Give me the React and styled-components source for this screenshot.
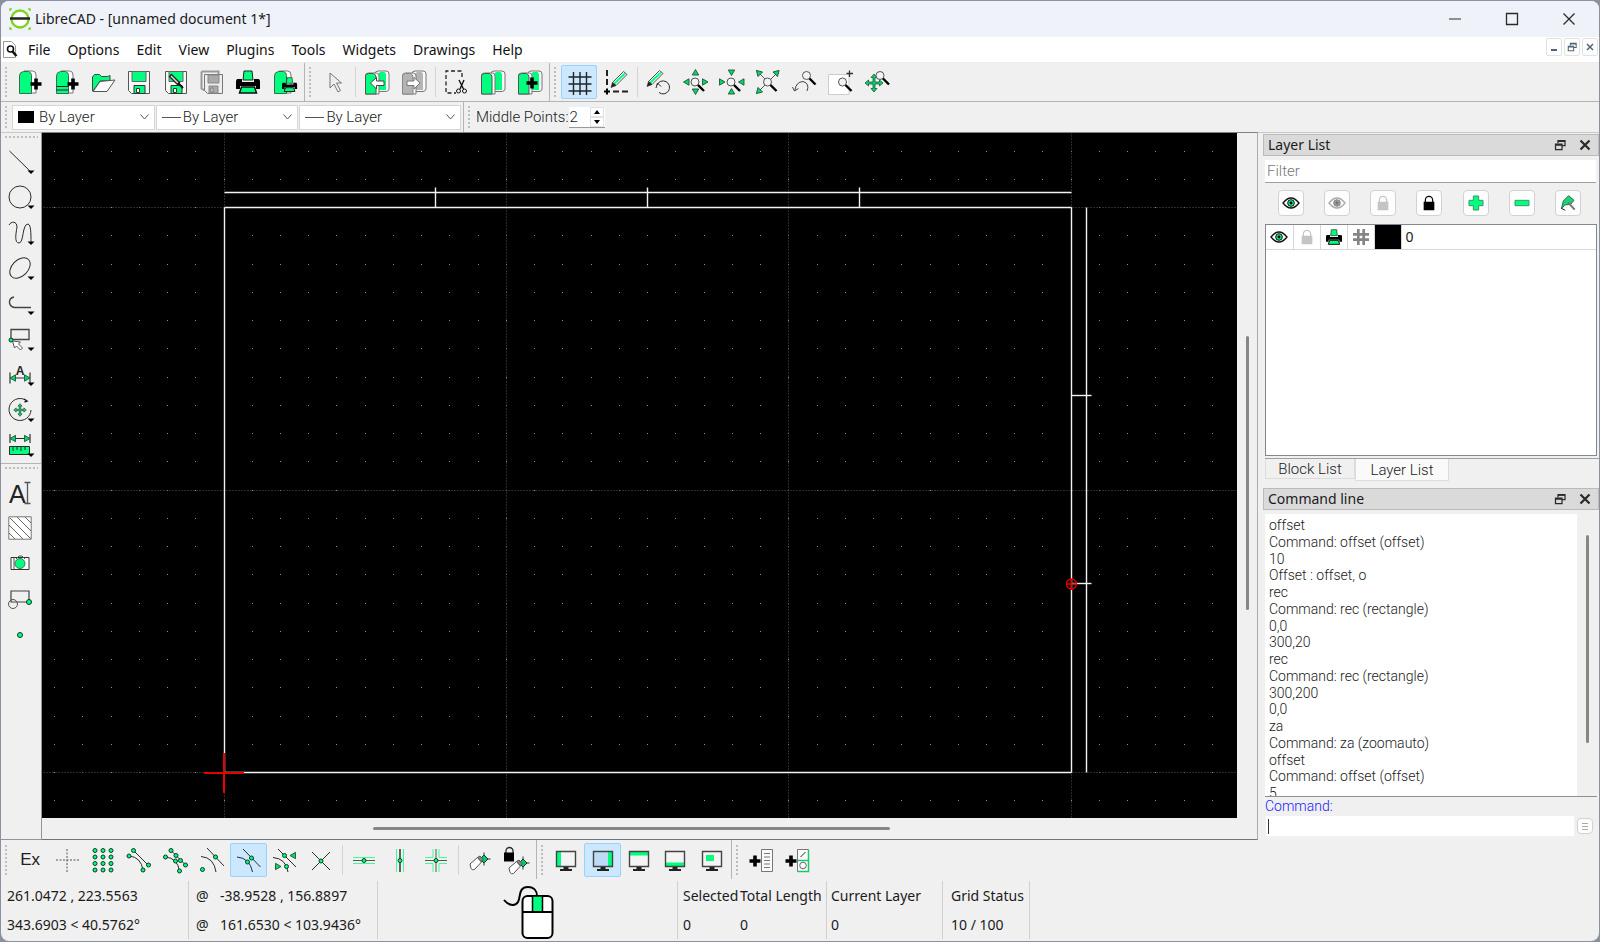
import React from "react";
import styled, { createGlobalStyle } from "styled-components";

const GREEN = "#00ff7f";
const INK = "#2b2b2b";

const GlobalStyle = createGlobalStyle`
  * {
    box-sizing: border-box;
  }

  body {
    margin: 0;
    background: #8b919d;
    color: #1a1a1a;
    font-family: "Noto Sans", "Open Sans", sans-serif;
    font-size: 14px;
    line-height: 20px;
  }

  button, input, select {
    font: inherit;
    color: inherit;
    margin: 0;
    padding: 0;
    border: none;
    outline: none;
    border-radius: 0;
    background: transparent;
  }
`;

/* ---------- icons ---------- */

const Svg = styled.svg`
  display: block;
  flex: none;
  overflow: visible;
  fill: none;
  stroke: ${(p) => p.$color || INK};
`;

const Dot = ({ x, y, r = 2 }) => <circle cx={x} cy={y} r={r} fill={GREEN} stroke="#0b3d22" strokeWidth="1" />;

const Plus = ({ x, y, s = 5.5, w = 3.6 }) => (
  <path d={`M${x - s} ${y}h${2 * s}M${x} ${y - s}v${2 * s}`} stroke="#000" strokeWidth={w} />
);

const Magnifier = ({ x, y }) => (
  <g>
    <circle cx={x} cy={y} r="4" stroke="#555" fill="#f4f4f4" />
    <path d={`M${x + 3} ${y + 3}l6 6`} stroke="#000" strokeWidth="2.4" />
  </g>
);

const Tri = ({ x, y, a = 0 }) => (
  <path d="M0 -3L3.2 2.5H-3.2Z" transform={`translate(${x} ${y}) rotate(${a})`} fill="#00d86c" stroke="#24543a" strokeWidth=".9" />
);

const Pages = ({ fill, edge = "#555", children }) => (
  <g>
    <path d="M10 4q0-3 3-3h8q3 0 3 3v15q0 2-3 2.500H10z" fill="#fafafa" stroke="#777" />
    <path d="M13.500 4q.5-2 2-2h4q1.500 1 1.500 3v15h-7.500z" fill={fill} stroke="none" />
    <path d="M.5 6q0-3 3-3h8q2.500 0 2.500 3v18H.5z" fill="#fafafa" stroke="#777" />
    <path d="M.5 6q0-2.500 3-2.500h5q2.500 1 2.500 3.500v17H.5z" fill={fill} stroke={edge} />
    {children}
  </g>
);

const Page = () => (
  <g>
    <path d="M6 1h8.500q3.500 0 3.500 4v18H7" fill="#fff" stroke="#777" />
    <path d="M1.500 6q0-4 4-4.500h5q3 1 3 4V23.500h-12z" fill={GREEN} stroke="#3c6b50" />
  </g>
);

const Floppy = ({ fill }) => (
  <g>
    <path d="M1.500 1.500h21v22h-18l-3-3z" fill="#f7f7f7" stroke="#555" />
    <path d="M5 1.500h14v10H5z" fill={fill} stroke="#666" />
    <path d="M7 15.500h11v8H7z" fill={fill} stroke="#333" />
    <path d="M9.500 18.500h3v4h-3z" fill="#fff" stroke="#333" />
  </g>
);

const Pencil = ({ x, y }) => (
  <g transform={`translate(${x} ${y})`}>
    <path d="M1.500-5L12.500-16l3.500 3L5-2z" fill="#f8f8f8" stroke="#555" />
    <path d="M3-3.500L14-14" stroke={GREEN} strokeWidth="2" />
    <path d="M0 0l1.500-5L5-2z" fill="#222" stroke="#222" strokeWidth=".6" />
  </g>
);

const Printer = () => (
  <g>
    <path d="M8 1h8l1 9H7z" fill={GREEN} stroke="#222" />
    <path d="M1 9h5v3h12V9h5l1 2v8h-4v-3H4v3H0v-8z" fill="#000" stroke="none" />
    <path d="M5.500 17h13l2 6h-17z" fill={GREEN} stroke="#111" strokeWidth="1.500" />
  </g>
);

const Cursor = ({ fill = "#fff" }) => (
  <path d="M8 3v15l4-4 4 8 2.500-1.500-4-7.500h5z" fill={fill} stroke="#777" />
);

const Monitor = ({ children, fill = "#f4f4f4" }) => (
  <g>
    <path d="M2.500 3.500h19v15h-19z" fill={fill} stroke="none" />
    {children}
    <path d="M2.500 3.500h19v15h-19z" stroke="#444" strokeWidth="1.400" />
    <path d="M9.500 20h5M6 22h12" stroke="#222" strokeWidth="1.800" />
  </g>
);

const Eraser = ({ x = 0, y = 0 }) => (
  <g transform={`translate(${x} ${y})`}>
    <path d="M8.500 11h13M15 4.500v13" stroke="#333" />
    <path d="M15 7l4 4-4 4-4-4z" fill="#00c967" stroke="#0b3d22" />
    <path d="M1 16l7.500-6.500 4 4.500-7 7.500q-2 1-3.500-1z" fill="#fff" stroke="#555" />
    <path d="M8.500 9.500L11 8l3 3.500-1.500 2.500z" fill="#888" stroke="#555" />
  </g>
);

const Lock = ({ color = "#000" }) => (
  <g>
    <path d="M6.500 12V8a5.500 6 0 0 1 11 0v4" stroke={color} strokeWidth="1.800" />
    <path d="M4 10h16v13H4z" fill={color} stroke="none" />
  </g>
);

const Eye = ({ off }) => (
  <g>
    <path d="M0 12q12-15 24 0-12 15-24 0z" fill="#fff" stroke={off ? "#aaa" : "#111"} strokeWidth="2" />
    <circle cx="12" cy="12" r="5" fill={off ? "#999" : GREEN} stroke={off ? "#888" : "#111"} strokeWidth="1.500" />
    <circle cx="12" cy="12" r="2.200" fill={off ? "#777" : "#000"} stroke="none" />
  </g>
);

const moveArrows =
  "M0-9l3 3.500H1v4.500h4.500v-2L9 0 5.500 3V1H1v4.500h2L0 9l-3-3.500h2V1h-4.500v2L-9 0l3.500-3v2H-1v-4.500h-2z";

const icons = {
  newFile: <g><Page /><Plus x={18} y={14} /></g>,
  newTemplate: <g><Page /><path d="M1.500 16.500h12M1.500 20h12" stroke="#222" /><Plus x={18} y={14} /></g>,
  open: (
    <g>
      <path d="M1.500 21V7l2-2.500h5l2 2h6l2.500-1v5L9 11 2 21z" fill={GREEN} stroke="#444" />
      <path d="M2 21.500L9 11.500l15-1.500-8 11.500z" fill="#fafafa" stroke="#555" />
    </g>
  ),
  save: <Floppy fill={GREEN} />,
  saveAs: <g><Floppy fill={GREEN} /><path d="M6 5l9 9" stroke="#222" strokeWidth="4" /><path d="M7 6l7 7" stroke="#ddd" strokeWidth="1.500" /><path d="M14 13l5 5" stroke="#111" strokeWidth="2" /></g>,
  saveAll: (
    <g>
      <path d="M1.500 1.500h17v3M1.500 1.500v17l3 2" stroke="#999" strokeWidth="2" />
      <path d="M4.500 4.500h18v19h-15l-3-3z" fill="#eee" stroke="#777" />
      <path d="M8 5h11v8H8zM9 16h9v7H9z" fill="#aaa" stroke="#888" />
      <path d="M11 18h2v4h-2z" fill="#fff" stroke="#777" />
    </g>
  ),
  print: <Printer />,
  preview: <g><Page /><g transform="translate(9 7) scale(.63)"><Printer /></g></g>,
  cursor: <Cursor fill="#eee" />,
  undo: <Pages fill={GREEN}><path d="M5.500 13l6-5.500V11h7.500v4.500h-7.500V19z" fill="#fff" stroke="#444" /></Pages>,
  redo: <Pages fill="#b4b4b4" edge="#888"><path d="M18 13l-6-5.500V11H5v4.500h7V19z" fill="#fff" stroke="#777" /></Pages>,
  cut: (
    <g>
      <path d="M17 7V1H1v22h10" strokeDasharray="4 2.500" stroke="#222" strokeWidth="1.300" />
      <path d="M14 10l4.500 9M19 10l-4 9" stroke="#111" strokeWidth="1.400" />
      <circle cx="13.500" cy="21" r="2" stroke="#111" /><circle cx="19.500" cy="21" r="2" stroke="#111" />
    </g>
  ),
  copy: <Pages fill={GREEN} />,
  paste: <Pages fill={GREEN}><Plus x={14} y={13} /></Pages>,
  grid: <path d="M6.500 2v23M13 2v23M19.500 2v23M1.500 7h23M1.500 14h23M1.500 21h23" stroke="#222" strokeWidth="1.400" />,
  draft: <g><path d="M3 0v6M3 9v6" stroke="#222" strokeWidth="2" /><path d="M9 21.500h6M18 21.500h6" stroke="#222" strokeWidth="2" /><Plus x={3} y={21.5} s={3} w={2} /><Pencil x={7} y={17.5} /></g>,
  redraw: <g><path d="M10 15a6.500 6.500 0 1 1 2 7.500M9 18l1.500-5 3.500 3.500" /><Pencil x={0} y={16.5} /></g>,
  zoomIn: <g><Tri x={11.5} y={2.5} /><Tri x={11.5} y={21.5} a={180} /><Tri x={2.5} y={12} a={270} /><Tri x={21} y={12} a={90} /><Magnifier x={11} y={12} /></g>,
  zoomOut: <g><Tri x={11.5} y={2.5} a={180} /><Tri x={11.5} y={21.5} /><Tri x={2} y={12} a={90} /><Tri x={21.5} y={12} a={270} /><Magnifier x={11} y={12} /></g>,
  zoomAuto: <g><path d="M3 3l18 18M21 3L3 21" stroke="#555" /><Tri x={2.5} y={2.5} a={-45} /><Tri x={21} y={2.5} a={45} /><Tri x={2.5} y={21.5} a={225} /><Magnifier x={11.5} y={12} /></g>,
  zoomPrevious: <g><path d="M2 20q1-8 8-8.500 7 2 4 9.500M-.5 17l2 4 4-2.500" stroke="#444" /><Magnifier x={13.5} y={5.5} /></g>,
  zoomWindow: <g><path d="M-.5 4.500h20.500v20H-.5z" fill="#fff" stroke="#ccc" /><path d="M17.500 3.500h6.500M20.500.5V7" stroke="#333" strokeWidth="1.300" /><Magnifier x={13.5} y={12} /></g>,
  pan: <g><path d={moveArrows} transform="translate(8 13)" fill="#00d86c" stroke="#24543a" strokeWidth=".8" /><Magnifier x={14} y={5.5} /></g>,

  line: <path d="M1.500 1L23 22" />,
  circle: <circle cx="12" cy="12" r="11" />,
  curve: <path d="M1 4C3 0 9 0 9 6 8 12 6 22 11 22 16 22 14 3 20 3 23 4 23 12 23 22" />,
  ellipse: <ellipse cx="12" cy="12" rx="12" ry="8" transform="rotate(-45 12 12)" />,
  polyline: <path d="M6 6Q1 7 1.500 12q1 4 5 4.500H23" stroke="#444" strokeWidth="1.400" />,
  select: <g><path d="M3 2.500h18v10H3z" stroke="#444" strokeWidth="1.300" /><Dot x={3} y={13} /><path d="M4.500 14l2 7 2-2 4 4 2-2-4-4 2-2z" fill="#fff" stroke="#555" /></g>,
  dimension: <g><path d="M2 10.500v11M22 10.500v11M3 16h18" stroke="#333" strokeWidth="1.200" /><Tri x={5} y={16} a={270} /><Tri x={19} y={16} a={90} /><text x="12" y="13" textAnchor="middle" fontFamily="Liberation Sans, sans-serif" fontWeight="bold" fontSize="12" fill="#222" stroke="none">A</text></g>,
  modify: <g><path d="M19 3A11 11 0 1 0 23 12" /><path d="M16 1l3 2-2.500 1" stroke="#222" strokeWidth="1.500" /><path d={moveArrows} transform="translate(12 12) scale(.7)" fill="#00d86c" stroke="#24543a" /></g>,
  measure: <g><path d="M2 1v9M22 1v9M3 5.500h18" strokeWidth="1.200" /><Tri x={5} y={5.5} a={270} /><Tri x={19} y={5.5} a={90} /><path d="M1.500 13.500h20v8h-20z" fill={GREEN} /><path d="M5 14v4M9 14v3M13 14v4M17 14v3" /></g>,
  text: <g><text x="1" y="22" fontFamily="Liberation Sans, sans-serif" fontSize="25" fill="#222" stroke="none">A</text><path d="M16.500 1.500h6M16.500 22.500h6M19.500 1.500v21" stroke="#555" strokeWidth="1.300" /></g>,
  hatch: <g><path d="M.8.800h22.400v22.400H.8z" fill="#fff" stroke="#777" /><path d="M1 17l6 6M1 9l14 14M2 2l21 21M9 1l14 14M17 1l6 6" stroke="#666" /></g>,
  image: <g><path d="M3 5.500h18v12H3z" fill="#fff" stroke="#333" /><path d="M6 6v11M8 7l3-3h3l3 3" stroke="#555" /><circle cx="12" cy="11.500" r="5" fill={GREEN} stroke="#377553" /></g>,
  block: <g><path d="M3 3h18v11H3z" stroke="#444" strokeWidth="1.200" /><circle cx="5" cy="16" r="4.500" stroke="#555" /><Dot x={21} y={14} r={2.5} /></g>,
  point: <Dot x={12} y={12} r={2.5} />,

  free: <path d="M1 12h23M12 1v23" strokeDasharray="2 1.500" stroke="#555" />,
  snapGrid: <g>{[4, 12, 20].map((x) => [2.5, 9, 15.5, 22].map((y) => <Dot key={`${x}-${y}`} x={x} y={y} />))}</g>,
  endpoints: <g><path d="M6.500 2.500l15 15M2 8q12 1 14 14" /><Dot x={2} y={8} /><Dot x={6.500} y={2.5} /><Dot x={21.500} y={17} /><Dot x={16} y={22} /></g>,
  onEntity: <g><path d="M7 2.500l15 15M1.500 9q12 1 14 14" /><Dot x={1.500} y={9} /><Dot x={7} y={2.500} /><Dot x={12} y={7.500} /><Dot x={11.500} y={13} /><Dot x={16.500} y={12.500} /><Dot x={21.500} y={17} /><Dot x={15.500} y={23} /></g>,
  center: <g><path d="M7 0l17 18M1 8.500q13 1 15 15.500" /><Dot x={15.500} y={9} /><Dot x={2.500} y={21.500} /></g>,
  middle: <g><path d="M7 1l17.500 18M1 9q13 1 15.500 15" /><Dot x={15.500} y={10} /><Dot x={11.500} y={14} /></g>,
  distance: <g><path d="M5 1l18 18M0 9.500q13 1 15 14.500" /><Dot x={11.500} y={7.500} /><Dot x={13.500} y={18.500} /><Tri x={20} y={7.500} a={270} /><Tri x={5} y={18.500} a={90} /></g>,
  intersection: <g><path d="M3 4l18 18M21 4L3 22" /><Dot x={12} y={13} /></g>,
  horizontal: <g><path d="M1 9.500h22M1 15.500h22" stroke="#3dfd99" /><path d="M1 12.500h22" stroke="#555" /><Dot x={12} y={12.500} /></g>,
  vertical: <g><path d="M7.500 1v23M14.500 1v23" stroke="#3dfd99" /><path d="M11 1v23" stroke="#333" strokeWidth="1.500" /><Dot x={11} y={12.500} /></g>,
  ortho: <g><path d="M0 9.500h8V1M14 1v8.500h8M0 15.500h8V24M14 24v-8.500h8" stroke="#3dfd99" /><path d="M0 12.500h22M11 1v23" stroke="#555" /><Dot x={11} y={12.500} /></g>,
  relativeZero: <Eraser x={1} />,
  lockZero: <g><Eraser x={3} y={4} /><path d="M1 5V3a3.500 3.500 0 0 1 7 0v2" strokeWidth="1.300" /><path d="M-1 4.500H9v9H-1z" fill="#000" stroke="none" /></g>,
  dockLeft: <Monitor><path d="M3 4h4v14H3z" fill={GREEN} stroke="none" /></Monitor>,
  dockRight: <Monitor fill="#bcdcf5"><path d="M17 4h4v14h-4z" fill={GREEN} stroke="none" /></Monitor>,
  dockTop: <Monitor><path d="M3 4h18v3.500H3z" fill={GREEN} stroke="none" /></Monitor>,
  dockBottom: <Monitor><path d="M3 14.500h18V18H3z" fill={GREEN} stroke="none" /></Monitor>,
  dockFloat: <Monitor><path d="M6 7h8v6H6z" fill={GREEN} stroke="none" /></Monitor>,
  addMenu: <g><Plus x={6} y={13} /><path d="M12.500 1.500h11v22h-11z" fill="#fafafa" stroke="#777" /><path d="M15 5.500h6M15 9h6M15 12.500h6M15 16h6M15 19.500h6" stroke="#777" /></g>,
  addToolbar: <g><Plus x={5} y={13} /><path d="M11.500 1.500h11v22h-11z" fill="#fafafa" stroke="#777" /><path d="M12 12.500h10.500V2M12 23.500h10.500v-11" stroke="#18c96f" strokeWidth="1.500" /><path d="M14.500 9l5-5" /><circle cx="17" cy="17.500" r="3.300" stroke="#666" /></g>,

  eye: <Eye />,
  eyeOff: <Eye off />,
  lockGrey: <Lock color="#c4c4c4" />,
  lock: <Lock />,
  add: <path d="M8 1.500h8V8h6.500v8H16v6.500H8V16H1.500V8H8z" fill={GREEN} stroke="#3f9468" strokeWidth="1.500" />,
  remove: <path d="M1.500 8h21v8h-21z" fill={GREEN} stroke="#3f9468" strokeWidth="1.500" />,
  attributes: <g><path d="M13 1l8 7-5 6-9 1-5 6 3-12z" fill="#18d677" stroke="#2b6c49" strokeWidth="1.500" /><path d="M12 11l10 11" stroke="#777" strokeWidth="3" /><path d="M2 20l6 3" stroke="#222" strokeWidth="1.500" /></g>,
  hash: <path d="M8 0v24M16 0v24M0 8h24M0 16h24" stroke="#858585" strokeWidth="4" />,
  restore: <g><path d="M8 9V3h14v10h-6" strokeWidth="2.500" /><path d="M8 4h14" strokeWidth="3.500" /><path d="M3 10h13v11H3zM3 12h13" strokeWidth="2.500" /></g>,
  close: <path d="M3 3l18 18M21 3L3 21" strokeWidth="4.500" />,
};

const Icon = ({ name, size = 24, menu, color }) => (
  <Svg width={size} height={size} viewBox="0 0 24 24" aria-hidden="true" $color={color}>
    {icons[name]}
    {menu && <path d="M19.500 20.500h7l-3.500 3.500z" fill="#000" stroke="none" />}
  </Svg>
);

/* ---------- window frame ---------- */

const Window = styled.div`
  display: flex;
  flex-direction: column;
  min-height: calc(100vh - 2px);
  margin: 1px;
  border-radius: 8px;
  overflow: hidden;
  background: #f0f0f0;
`;

const TitleBar = styled.header`
  display: flex;
  align-items: center;
  height: 36px;
  padding: 0 2px 0 8px;
  background: #eff3f9;
`;

const Title = styled.h1`
  flex: 1;
  margin: 0 0 0 4px;
  font-size: 14px;
  font-weight: 400;
`;

const WindowButton = styled.button`
  display: flex;
  align-items: center;
  justify-content: center;
  width: 57px;
  height: 36px;
`;

const MenuBar = styled.nav`
  display: flex;
  align-items: center;
  gap: 17px;
  height: 26px;
  padding: 1px 1px 0;
  background: #fff;
  border-bottom: 1px solid #ececec;

  a {
    color: #111;
    text-decoration: none;
  }
`;

const MenuIcon = styled.span`
  width: 16px;
  margin-right: -7px;
`;

const ChildButtons = styled.div`
  display: flex;
  gap: 2px;
  margin-left: auto;
  padding-bottom: 6px;
`;

const ChildButton = styled.button`
  display: flex;
  align-items: center;
  justify-content: center;
  width: 16px;
  height: 18px;
  background: #fff;
  border: 1px solid #e2e2e2;
  border-radius: 2px;
`;

/* ---------- toolbars ---------- */

const Toolbar = styled.div`
  display: flex;
  height: ${(p) => p.$height}px;
  border-bottom: ${(p) => (p.$line ? "1px solid #b4b4b4" : "none")};
`;

const Group = styled.div`
  display: flex;
  align-items: center;
  width: ${(p) => (p.$width ? `${p.$width}px` : "auto")};
  padding-right: 1px;
  border-right: ${(p) => (p.$last ? "none" : "1px solid #b4b4b4")};
`;

const Handle = styled.div`
  flex: none;
  width: 11px;
  height: ${(p) => p.$height || 30}px;
  padding-left: 4px;

  &::before {
    content: "";
    display: block;
    width: 2px;
    height: 100%;
    background: repeating-linear-gradient(#bdbdbd 0 2px, transparent 2px 4px);
  }
`;

const ToolButton = styled.button`
  display: flex;
  flex: 1;
  align-items: center;
  justify-content: center;
  min-width: 0;
  height: 34px;
  color: #222;
  font-family: "Liberation Sans", sans-serif;
  font-size: 17px;
  background: ${(p) => (p.$active ? "#cce8ff" : "transparent")};
  border: 1px solid ${(p) => (p.$active ? "#99d1ff" : "transparent")};
  border-radius: 2px;
`;

const Separator = styled.div`
  flex: none;
  width: 1px;
  height: 30px;
  margin: 0 3px;
  background: #d4d4d4;
`;

const Combo = styled.label`
  display: flex;
  align-items: center;
  width: ${(p) => p.$width}px;
  height: 25px;
  margin-right: 1px;
  padding: 0 5px 0 5px;
  background: #fff;
  border: 1px solid #d6d6d6;
`;

const ComboSelect = styled.select`
  flex: 1;
  min-width: 0;
  appearance: none;
  font-family: Roboto, "Liberation Sans", sans-serif;
  font-size: 15px;
  font-weight: 300;
`;

const Swatch = styled.span`
  width: 16px;
  height: 12px;
  margin-right: 5px;
  background: #000;
`;

const LineSample = styled.span`
  width: 19px;
  height: 1px;
  margin-right: 2px;
  background: #555;
`;

const SpinLabel = styled.label`
  padding-left: 1px;
  font-family: Roboto, "Liberation Sans", sans-serif;
  font-size: 15px;
  font-weight: 300;
`;

const Spin = styled.div`
  display: flex;
  width: 36px;
  height: 21px;
  background: #fff;
  border-bottom: 1px solid #999;

  input {
    flex: 1;
    min-width: 0;
    padding-left: 1px;
    font-family: Roboto, "Liberation Sans", sans-serif;
    font-size: 15px;
    font-weight: 300;
  }
`;

const SpinButtons = styled.div`
  display: flex;
  flex-direction: column;
  width: 14px;
  margin-right: 1px;

  button {
    display: flex;
    flex: 1;
    align-items: center;
    justify-content: center;
    border: 1px solid #e2e2e2;
  }
`;

/* ---------- main area ---------- */

const Main = styled.main`
  display: flex;
  flex: 1;
`;

const SideBar = styled.div`
  display: flex;
  flex-direction: column;
  width: 41px;
  border-top: 1px solid #c9c9c9;
  border-right: 1px solid #8f959c;
  border-bottom: 1px solid #8f959c;
`;

const SideGroup = styled.div`
  display: flex;
  flex-direction: column;
  height: ${(p) => p.$height}px;
  padding: 3px 2px 0 0;
  border-bottom: ${(p) => (p.$last ? "none" : "1px solid #b4b4b4")};

  &::before {
    content: "";
    flex: none;
    height: 2px;
    margin: 0 1px 6px 4px;
    background: repeating-linear-gradient(90deg, #bdbdbd 0 2px, transparent 2px 4px);
  }
`;

const Workspace = styled.section`
  display: flex;
  flex: 1;
  flex-direction: column;
  min-width: 0;
  border-top: 1px solid #7c8288;
  border-right: 1px solid #a9adb3;
  border-bottom: 1px solid #6c747c;
`;

const ViewRow = styled.div`
  display: flex;
  flex: 1;
`;

const Drawing = styled.svg`
  display: block;
  flex: 1;
  min-width: 0;
  min-height: 400px;
  background: #000;
  fill: none;
`;

const VerticalTrack = styled.div`
  display: flex;
  flex-direction: column;
  align-items: center;
  width: ${(p) => p.$width}px;
`;

const HorizontalTrack = styled.div`
  display: flex;
  align-items: center;
  height: 21px;
  padding-right: 20px;
`;

const Space = styled.span`
  flex: ${(p) => p.$part} 1 0;
`;

const Thumb = styled.span`
  flex: ${(p) => p.$part} 1 0;
  min-width: 3px;
  min-height: 3px;
  border-radius: 2px;
  background: #868686;
`;

const UNIT = 28.24;
const ORIGIN = { x: 182, y: 639.5 };

const at = (ux, uy) => [ORIGIN.x + ux * UNIT, ORIGIN.y - uy * UNIT];

const seg = (x1, y1, x2, y2) => {
  const a = at(x1, y1).map((v) => Math.floor(v) + 0.5);
  const b = at(x2, y2).map((v) => Math.floor(v) + 0.5);
  return `M${a[0]} ${a[1]}L${b[0]} ${b[1]}`;
};

const gridDots = () => {
  const parts = [];
  for (let i = -6; i < 60; i += 1) {
    for (let j = -12; j < 23; j += 1) {
      const [x, y] = at(i, j);
      parts.push(`M${Math.floor(x)} ${Math.floor(y) + 0.5}h1`);
    }
  }
  return parts.join("");
};

const DrawingView = () => (
  <Drawing width="100%" role="img" aria-label="Drawing">
    <path d={gridDots()} stroke="#8c8c8c" />
    <g stroke="#555" strokeDasharray="1 2">
      {[0, 10, 20, 30].map((x) => <path key={`v${x}`} d={seg(x, 30, x, -20)} />)}
      {[0, 10, 20].map((y) => <path key={`h${y}`} d={seg(-10, y, 60, y)} />)}
    </g>
    <g stroke="#f2f2f2" strokeWidth="1.400">
      <path d={seg(0, 0, 30, 0)} />
      <path d={seg(30, 0, 30, 20)} />
      <path d={seg(30, 20, 0, 20)} />
      <path d={seg(0, 20, 0, 0)} />
      <path d={seg(0, 20.54, 30, 20.54)} />
      <path d={seg(30.54, 0, 30.54, 20)} />
      {[7.5, 15, 22.5].map((x) => <path key={x} d={seg(x, 20, x, 20.73)} />)}
      {[6.68, 13.35].map((y) => <path key={y} d={seg(30, y, 30.72, y)} />)}
    </g>
    <g stroke="#e60000" strokeWidth="2">
      <path d="M162 640h40M182 620v40" />
    </g>
    <g stroke="#e60000" strokeWidth="1.300">
      <circle cx="1029.500" cy="451" r="5" />
      <path d="M1024 451h11M1029.500 446v11" />
    </g>
  </Drawing>
);

/* ---------- docks ---------- */

const Dock = styled.aside`
  display: flex;
  flex-direction: column;
  width: 341px;
  padding: 1px 0 4px 5px;
  border-top: 1px solid #c9c9c9;
`;

const DockTitle = styled.h2`
  display: flex;
  align-items: center;
  gap: 13px;
  height: 22px;
  margin: 0;
  padding: 0 7px 0 4px;
  font-size: 14px;
  font-weight: 400;
  background: #dadada;
  border: 1px solid #bababa;

  span {
    flex: 1;
  }
`;

const Filter = styled.input`
  height: 23px;
  margin: 4px 3px 0 2px;
  padding-left: 2px;
  font-family: Roboto, "Liberation Sans", sans-serif;
  font-size: 15px;
  font-weight: 300;
  background: #fff;
  border-bottom: 1px solid #a0a0a0;

  &::placeholder {
    color: #777;
    opacity: 1;
  }
`;

const LayerActions = styled.div`
  display: flex;
  justify-content: space-around;
  margin: 7px 8px 8px 5px;
`;

const LayerButton = styled.button`
  display: flex;
  align-items: center;
  justify-content: center;
  width: 26px;
  height: 26px;
  background: #fdfdfd;
  border: 1px solid #d2d2d2;
  border-radius: 4px;
`;

const LayerPane = styled.div`
  height: 232px;
  margin: 0 2px;
  background: #fff;
  border: 1px solid #828790;
`;

const LayerTable = styled.table`
  width: 100%;
  border-collapse: collapse;

  td {
    height: 24px;
    padding: 0 4px;
    border-bottom: 1px solid #d8d8d8;
  }
`;

const IconCell = styled.td`
  width: 27px;
  border-right: 1px solid #d8d8d8;
  background: ${(p) => (p.$black ? "#000" : "#fff")};

  svg {
    margin: 0 auto;
  }
`;

const Tabs = styled.div`
  display: flex;
  align-items: flex-start;
  height: 30px;
  margin: 2px 0 0 2px;
  border-top: 1px solid #a0a0a0;
`;

const Tab = styled.button`
  width: ${(p) => (p.$active ? 94 : 90)}px;
  height: ${(p) => (p.$active ? 22 : 20)}px;
  font-family: Roboto, "Liberation Sans", sans-serif;
  font-size: 15px;
  font-weight: 300;
  background: ${(p) => (p.$active ? "#fafafa" : "#f0f0f0")};
  border: 1px solid #dcdcdc;
  border-top: none;
`;

const LogArea = styled.div`
  display: flex;
  flex: 1;
  margin: 4px 2px 0;
  border-bottom: 1px solid #909090;
  overflow: hidden;
`;

const Log = styled.ol`
  display: flex;
  flex: 1;
  flex-direction: column;
  justify-content: space-between;
  min-height: 200px;
  margin: 0 0 -5px;
  padding: 3px 0 0 4px;
  list-style: none;
  background: #fff;
  font-family: Roboto, "Liberation Sans", sans-serif;
  font-weight: 300;
  line-height: 16px;
`;

const CommandLabel = styled.label`
  margin-left: 2px;
  color: #1a1aff;
  font-family: Roboto, "Liberation Sans", sans-serif;
  font-weight: 300;
  line-height: 19px;
`;

const CommandRow = styled.div`
  display: flex;
  align-items: center;
  gap: 3px;
  height: 20px;
  padding: 0 6px 0 3px;
`;

const CommandBox = styled.div`
  display: flex;
  flex: 1;
  align-items: center;
  height: 20px;
  padding-left: 2px;
  background: #fff;

  input {
    flex: 1;
    min-width: 0;
  }
`;

const Caret = styled.span`
  width: 1px;
  height: 15px;
  background: #333;
`;

const HistoryButton = styled(LayerButton)`
  width: 16px;
  height: 16px;
`;

/* ---------- status bar ---------- */

const StatusBar = styled.footer`
  display: flex;
  height: 62px;
  padding: 2px 0;
`;

const Cell = styled.div`
  display: flex;
  gap: ${(p) => p.$gap || 0}px;
  width: ${(p) => p.$width}px;
  padding-top: 1px;
  padding-left: ${(p) => p.$pad || 5}px;
  border-right: 1px solid #d0d0d0;
`;

const Pair = styled.div`
  display: flex;
  flex-direction: column;
  justify-content: space-around;
  width: ${(p) => (p.$width ? `${p.$width}px` : "auto")};
  white-space: pre;
`;

const MouseCell = styled(Cell)`
  justify-content: center;
  align-items: center;
  padding: 3px 0 0;
`;

const MouseHint = () => (
  <Svg width="50" height="54" viewBox="0 0 50 54" aria-hidden="true">
    <path d="M1 15c4 5 11 7 14 2S15 2 25 2c6 0 9 4 9 9" stroke="#000" strokeWidth="2" />
    <rect x="19.500" y="11" width="30" height="42" rx="5" fill="#fff" stroke="#000" strokeWidth="2" />
    <path d="M29.500 11h10v16h-10z" fill={GREEN} stroke="#000" strokeWidth="1.500" />
    <path d="M20 27h29" stroke="#000" strokeWidth="2" />
  </Svg>
);

/* ---------- data ---------- */

const menus = ["File", "Options", "Edit", "View", "Plugins", "Tools", "Widgets", "Drawings", "Help"];

const topGroups = [
  { width: 304, tools: ["newFile", "newTemplate", "open", "save", "saveAs", "saveAll", "print", "preview"] },
  { width: 245, tools: ["cursor", "|", "undo", "redo", "|", "cut", "copy", "paste"] },
  {
    width: 347,
    active: "grid",
    tools: ["grid", "draft", "|", "redraw", "zoomIn", "zoomOut", "zoomAuto", "zoomPrevious", "zoomWindow", "pan"],
  },
];

const bottomGroups = [
  {
    width: 536,
    active: "middle",
    tools: [
      "Ex", "free", "snapGrid", "endpoints", "onEntity", "center", "middle", "distance", "intersection",
      "|", "horizontal", "vertical", "ortho", "|", "relativeZero", "lockZero",
    ],
  },
  { width: 195, active: "dockRight", tools: ["dockLeft", "dockRight", "dockTop", "dockBottom", "dockFloat"] },
  { width: 85, tools: ["addMenu", "addToolbar"] },
];

const drawTools = ["line", "circle", "curve", "ellipse", "polyline", "select", "dimension", "modify", "measure"];
const insertTools = ["text", "hatch", "image", "block", "point"];
const layerTools = ["eye", "eyeOff", "lockGrey", "lock", "add", "remove", "attributes"];

const log = [
  "offset", "Command: offset (offset)", "10", "Offset : offset, o", "rec", "Command: rec (rectangle)",
  "0,0", "300,20", "rec", "Command: rec (rectangle)", "300,200", "0,0", "za",
  "Command: za (zoomauto)", "offset", "Command: offset (offset)", "5",
];

const ToolGroups = ({ groups }) =>
  groups.map((group, i) => (
    <Group key={i} $width={group.width} $last={i === groups.length - 1}>
      <Handle />
      {group.tools.map((tool, n) =>
        tool === "|" ? (
          <Separator key={n} />
        ) : (
          <ToolButton key={n} type="button" aria-label={tool} $active={tool === group.active}>
            {tool === "Ex" ? "Ex" : <Icon name={tool} />}
          </ToolButton>
        )
      )}
    </Group>
  ));

const LayerCombo = ({ label, width, children }) => (
  <Combo $width={width}>
    {children}
    <ComboSelect aria-label={label}>
      <option>By Layer</option>
    </ComboSelect>
    <Svg width="9" height="6" viewBox="0 0 9 6"><path d="M.5.500l4 4.500 4-4.500" stroke="#555" /></Svg>
  </Combo>
);

const DockHeader = ({ children }) => (
  <DockTitle>
    <span>{children}</span>
    <button type="button" aria-label="Float"><Icon name="restore" size={12} /></button>
    <button type="button" aria-label="Close"><Icon name="close" size={12} /></button>
  </DockTitle>
);

const App = () => (
  <>
    <GlobalStyle />
    <Window>
      <TitleBar>
        <Svg width="22" height="22" viewBox="0 0 22 22">
          <circle cx="11" cy="11" r="8.500" fill="#fff" stroke="#7ed321" strokeWidth="2.400" />
          <path d="M1 3V1h2M19 1h2v2M21 19v2h-2M3 21H1v-2" stroke="#7ed321" strokeWidth="1.500" />
          <path d="M1 10.500h20" stroke="#222" strokeWidth="2.500" />
        </Svg>
        <Title>LibreCAD - [unnamed document 1*]</Title>
        <WindowButton type="button" aria-label="Minimize">
          <Svg width="12" height="12"><path d="M0 6h12" /></Svg>
        </WindowButton>
        <WindowButton type="button" aria-label="Maximize">
          <Svg width="12" height="12"><path d="M.5.500h11v11H.5z" strokeWidth="1.300" /></Svg>
        </WindowButton>
        <WindowButton type="button" aria-label="Close window">
          <Svg width="12" height="12"><path d="M.5.500l11 11M11.500.500l-11 11" strokeWidth="1.300" /></Svg>
        </WindowButton>
      </TitleBar>

      <MenuBar>
        <MenuIcon>
          <Svg width="16" height="18" viewBox="0 0 16 18">
            <path d="M1.500.500h8l4 4v12h-12z" fill="#fff" stroke="#999" />
            <circle cx="8.500" cy="8" r="3" stroke="#111" strokeWidth="1.600" />
            <path d="M10.500 10.500l4 4.500" stroke="#111" strokeWidth="2.500" />
          </Svg>
        </MenuIcon>
        {menus.map((menu) => <a key={menu} href="#menu">{menu}</a>)}
        <ChildButtons>
          <ChildButton type="button" aria-label="Minimize drawing">
            <Svg width="8" height="8"><path d="M1 7h6" stroke="#50657a" strokeWidth="2" /></Svg>
          </ChildButton>
          <ChildButton type="button" aria-label="Restore drawing"><Icon name="restore" size={10} color="#50657a" /></ChildButton>
          <ChildButton type="button" aria-label="Close drawing"><Icon name="close" size={8} color="#50657a" /></ChildButton>
        </ChildButtons>
      </MenuBar>

      <Toolbar $height={39} $line>
        <ToolGroups groups={topGroups} />
      </Toolbar>

      <Toolbar $height={30}>
        <Group $width={463}>
          <Handle $height={22} />
          <LayerCombo label="Color" width={143}><Swatch /></LayerCombo>
          <LayerCombo label="Width" width={143}><LineSample /></LayerCombo>
          <LayerCombo label="Line type" width={162}><LineSample /></LayerCombo>
        </Group>
        <Group $last>
          <Handle $height={22} />
          <SpinLabel htmlFor="middle-points">Middle Points:</SpinLabel>
          <Spin>
            <input id="middle-points" type="text" defaultValue="2" />
            <SpinButtons>
              <button type="button" aria-label="More"><Svg width="6" height="4"><path d="M0 4l3-4 3 4z" fill="#000" stroke="none" /></Svg></button>
              <button type="button" aria-label="Fewer"><Svg width="6" height="4"><path d="M0 0l3 4 3-4z" fill="#000" stroke="none" /></Svg></button>
            </SpinButtons>
          </Spin>
        </Group>
      </Toolbar>

      <Main>
        <SideBar>
          <SideGroup $height={331}>
            {drawTools.map((tool) => (
              <ToolButton key={tool} type="button" aria-label={tool}><Icon name={tool} menu /></ToolButton>
            ))}
          </SideGroup>
          <SideGroup $height={189} $last>
            {insertTools.map((tool) => (
              <ToolButton key={tool} type="button" aria-label={tool}><Icon name={tool} /></ToolButton>
            ))}
          </SideGroup>
        </SideBar>

        <Workspace>
          <ViewRow>
            <DrawingView />
            <VerticalTrack $width={20}>
              <Space $part={203} />
              <Thumb $part={273} />
              <Space $part={208} />
            </VerticalTrack>
          </ViewRow>
          <HorizontalTrack>
            <Space $part={331} />
            <Thumb $part={517} />
            <Space $part={347} />
          </HorizontalTrack>
        </Workspace>

        <Dock>
          <DockHeader>Layer List</DockHeader>
          <Filter type="text" placeholder="Filter" aria-label="Filter layers" />
          <LayerActions>
            {layerTools.map((tool) => (
              <LayerButton key={tool} type="button" aria-label={tool}><Icon name={tool} size={16} /></LayerButton>
            ))}
          </LayerActions>
          <LayerPane>
            <LayerTable>
              <tbody>
                <tr>
                  <IconCell><Icon name="eye" size={16} /></IconCell>
                  <IconCell><Icon name="lockGrey" size={16} /></IconCell>
                  <IconCell><Icon name="print" size={16} /></IconCell>
                  <IconCell><Icon name="hash" size={16} /></IconCell>
                  <IconCell $black />
                  <td>0</td>
                </tr>
              </tbody>
            </LayerTable>
          </LayerPane>
          <Tabs>
            <Tab type="button">Block List</Tab>
            <Tab type="button" $active>Layer List</Tab>
          </Tabs>
          <DockHeader>Command line</DockHeader>
          <LogArea>
            <Log>
              {log.map((entry, i) => <li key={i}>{entry}</li>)}
            </Log>
            <VerticalTrack $width={20}>
              <Space $part={21} />
              <Thumb $part={208} />
              <Space $part={53} />
            </VerticalTrack>
          </LogArea>
          <CommandLabel htmlFor="command">Command:</CommandLabel>
          <CommandRow>
            <CommandBox>
              <Caret />
              <input id="command" type="text" />
            </CommandBox>
            <HistoryButton type="button" aria-label="Command options">
              <Svg width="6" height="8"><path d="M0 1.500h6M0 4.500h6M0 7.500h6" stroke="#aaa" /></Svg>
            </HistoryButton>
          </CommandRow>
        </Dock>
      </Main>

      <Toolbar $height={39}>
        <ToolGroups groups={bottomGroups} />
      </Toolbar>

      <StatusBar>
        <Cell $width={188} $pad={6}>
          <Pair><span>261.0472 , 223.5563</span><span>343.6903 &lt; 40.5762°</span></Pair>
        </Cell>
        <Cell $width={189} $pad={7}>
          <Pair $width={24}><span>@</span><span>@</span></Pair>
          <Pair><span>-38.9528 , 156.8897</span><span>161.6530 &lt; 103.9436°</span></Pair>
        </Cell>
        <MouseCell $width={300}><MouseHint /></MouseCell>
        <Cell $width={149}>
          <Pair $width={57}><span>Selected</span><span>0</span></Pair>
          <Pair><span>Total Length</span><span>0</span></Pair>
        </Cell>
        <Cell $width={116} $pad={4}>
          <Pair><span>Current Layer</span><span>0</span></Pair>
        </Cell>
        <Cell $width={87} $pad={8}>
          <Pair><span>Grid Status</span><span>10 / 100</span></Pair>
        </Cell>
      </StatusBar>
    </Window>
  </>
);

export default App;
